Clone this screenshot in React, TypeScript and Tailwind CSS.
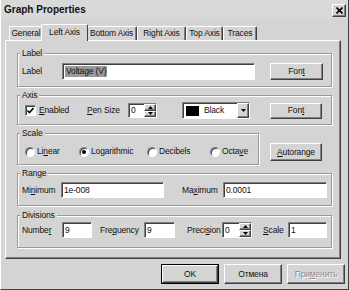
import React from "react";

const raised =
  "border border-t-white border-l-white border-r-[#404040] border-b-[#404040] shadow-[inset_-1px_-1px_0_#808080]";
const sunken =
  "bg-white border border-t-[#808080] border-l-[#808080] border-r-white border-b-white shadow-[inset_1px_1px_0_#404040]";

const Button = ({
  children,
  className = "",
  disabled = false,
}: {
  children: React.ReactNode;
  className?: string;
  disabled?: boolean;
}) => (
  <div
    className={`${raised} flex items-center justify-center ${
      disabled ? "text-[#8c8c8c] [text-shadow:1px_1px_0_#fff]" : ""
    } ${className}`}
  >
    {children}
  </div>
);

const Field = ({ value, className = "" }: { value: string; className?: string }) => (
  <div className={`${sunken} flex items-center pl-[2px] ${className}`}>{value}</div>
);

const Spin = ({ value, className = "" }: { value: string; className?: string }) => (
  <div className={`${sunken} flex items-stretch ${className}`}>
    <div className="flex-1 pl-[2px] flex items-center">{value}</div>
    <div className="w-[12px] flex flex-col">
      <div className={`${raised} flex-1 flex items-center justify-center bg-[#d4d4d4]`}>
        <svg width="5" height="3" viewBox="0 0 5 3">
          <path d="M2.5 0L5 3H0z" fill="#000" />
        </svg>
      </div>
      <div className={`${raised} flex-1 flex items-center justify-center bg-[#d4d4d4]`}>
        <svg width="5" height="3" viewBox="0 0 5 3">
          <path d="M0 0h5L2.5 3z" fill="#000" />
        </svg>
      </div>
    </div>
  </div>
);

const Group = ({
  title,
  className = "",
  children,
}: {
  title: string;
  className?: string;
  children: React.ReactNode;
}) => (
  <div
    className={`border border-[#9a9a9a] shadow-[inset_1px_1px_0_#fff,1px_1px_0_#fff] flex flex-col ${className}`}
  >
    <span className="-mt-[7px] ml-[2px] px-[2px] w-fit bg-[#d4d4d4] leading-[12px]">{title}</span>
    {children}
  </div>
);

const Radio = ({ checked = false }: { checked?: boolean }) => (
  <div className="w-[10px] h-[10px] rounded-full bg-white border border-t-[#808080] border-l-[#808080] border-r-white border-b-white shadow-[inset_1px_1px_0_#404040] flex items-center justify-center">
    {checked && <div className="w-[4px] h-[4px] rounded-full bg-black" />}
  </div>
);

const tabs = ["General", "Left Axis", "Bottom Axis", "Right Axis", "Top Axis", "Traces"];
const tabWidths = ["w-[34px]", "w-[47px]", "w-[51px]", "w-[49px]", "w-[37px]", "w-[34px]"];

export default function App() {
  return (
    <div
      className="w-[349px] h-[290px] bg-[#d4d4d4] text-[#111] text-[8.5px] tracking-[-0.15px] leading-[11px] flex flex-col border-r border-b border-r-[#404040] border-b-[#404040] border-l border-l-white overflow-hidden"
      style={{ fontFamily: '"Liberation Sans", Arial, sans-serif' }}
    >
      {/* title bar */}
      <div className="h-[19px] bg-[#d9d9d9] flex items-center justify-between pl-[3px] pr-[2px]">
        <span className="font-bold text-[10px] tracking-normal">Graph Properties</span>
        <div className={`${raised} bg-[#d4d4d4] w-[14px] h-[13px] flex items-center justify-center mt-[1px]`}>
          <svg width="7" height="7" viewBox="0 0 7 7">
            <path d="M0.5 0.5L6.5 6.5M6.5 0.5L0.5 6.5" stroke="#000" strokeWidth="1.6" />
          </svg>
        </div>
      </div>

      {/* tabs */}
      <div className="h-[21px] flex items-end pl-[8px]">
        {tabs.map((t, i) =>
          i === 1 ? (
            <div
              key={t}
              className={`${tabWidths[i]} -mx-[2px] h-[17px] -mb-[1px] z-10 relative bg-[#d4d4d4] border-t border-l border-r border-t-white border-l-white border-r-[#404040] rounded-t-[2px] flex items-start justify-center pt-[2px]`}
            >
              {t}
            </div>
          ) : (
            <div
              key={t}
              className={`${tabWidths[i]} h-[14px] border-t border-l border-r border-t-white border-l-white border-r-[#404040] shadow-[inset_-1px_0_0_#808080] rounded-t-[2px] flex items-center justify-center whitespace-nowrap`}
            >
              {t}
            </div>
          )
        )}
      </div>

      {/* panel */}
      <div className="ml-[4px] w-[336px] h-[219px] border border-t-white border-l-white border-r-[#404040] border-b-[#404040] shadow-[inset_-1px_-1px_0_#808080] pt-[12px] pl-[11px] flex flex-col">
        <Group title="Label" className="w-[315px] h-[34px]">
          <div className="mt-[4px] flex items-center pl-[4px]">
            <span className="w-[40px]">Label</span>
            <div className={`${sunken} w-[193px] h-[17px] flex items-center pl-[2px]`}>
              <span className="bg-[#9a9a9a] px-[1px] leading-[11px]">Voltage (V)</span>
            </div>
            <Button className="ml-[15px] w-[53px] h-[17px]">
              Fon<u>t</u>
            </Button>
          </div>
        </Group>

        <Group title="Axis" className="w-[315px] h-[30px] mt-[8px]">
          <div className="mt-[1px] h-[17px] flex items-center pl-[7px]">
            <div className="w-[62px] flex items-center">
              <div className={`${sunken} w-[11px] h-[11px] flex items-center justify-center`}>
                <svg width="7" height="7" viewBox="0 0 7 7">
                  <path d="M0.5 3.5L2.5 5.5L6.5 1" stroke="#000" strokeWidth="1.6" fill="none" />
                </svg>
              </div>
              <span className="ml-[3px]">
                <u>E</u>nabled
              </span>
            </div>
            <span className="w-[41px]">
              <u>P</u>en Size
            </span>
            <Spin value="0" className="w-[29px] h-[15px]" />
            <div className={`${sunken} ml-[25px] w-[68px] h-[17px] flex items-center`}>
              <div className="ml-[3px] w-[13px] h-[10px] bg-black" />
              <span className="ml-[5px] flex-1">Black</span>
              <div className={`${raised} bg-[#d4d4d4] w-[12px] h-full flex items-center justify-center`}>
                <svg width="5" height="3" viewBox="0 0 5 3">
                  <path d="M0 0h5L2.5 3z" fill="#000" />
                </svg>
              </div>
            </div>
            <Button className="ml-[20px] w-[52px] h-[16px]">
              Fon<u>t</u>
            </Button>
          </div>
        </Group>

        <div className="flex items-start mt-[8px]">
          <Group title="Scale" className="w-[242px] h-[32px]">
            <div className="mt-[6px] h-[13px] flex items-center pl-[7px]">
              <div className="w-[54px] flex items-center gap-[2px]">
                <Radio />
                <span>
                  Li<u>n</u>ear
                </span>
              </div>
              <div className="w-[68px] flex items-center gap-[2px]">
                <Radio checked />
                <span>Logarithmic</span>
              </div>
              <div className="w-[63px] flex items-center gap-[2px]">
                <Radio />
                <span>Decibels</span>
              </div>
              <div className="flex items-center gap-[2px]">
                <Radio />
                <span>
                  Octa<u>v</u>e
                </span>
              </div>
            </div>
          </Group>
          <Button className="ml-[11px] mt-[10px] w-[52px] h-[18px]">
            <span>
              <u>A</u>utorange
            </span>
          </Button>
        </div>

        <Group title="Range" className="w-[315px] h-[33px] mt-[8px]">
          <div className="mt-[3px] flex items-center pl-[4px]">
            <span className="w-[39px]">
              Mi<u>n</u>imum
            </span>
            <Field value="1e-008" className="w-[103px] h-[16px]" />
            <span className="ml-[18px] w-[41px]">
              Ma<u>x</u>imum
            </span>
            <Field value="0.0001" className="w-[104px] h-[16px]" />
          </div>
        </Group>

        <Group title="Divisions" className="w-[315px] h-[33px] mt-[9px]">
          <div className="mt-[1px] flex items-center pl-[4px]">
            <span className="w-[40px]">
              Numbe<u>r</u>
            </span>
            <Field value="9" className="w-[30px] h-[16px]" />
            <span className="ml-[8px] w-[44px]">
              Fre<u>q</u>uency
            </span>
            <Field value="9" className="w-[31px] h-[16px]" />
            <span className="ml-[12px] w-[35px]">
              Preci<u>s</u>ion
            </span>
            <Spin value="0" className="w-[30px] h-[16px]" />
            <span className="ml-[11px] w-[25px]">
              <u>S</u>cale
            </span>
            <Field value="1" className="w-[39px] h-[16px]" />
          </div>
        </Group>
      </div>

      {/* buttons */}
      <div className="flex justify-end gap-[5px] pr-[3px] mt-[5px]">
        <div className="w-[58px] h-[20px] border border-black flex">
          <Button className="flex-1">OK</Button>
        </div>
        <Button className="w-[58px] h-[20px]">Отмена</Button>
        <Button disabled className="w-[58px] h-[20px]">
          При<u>м</u>енить
        </Button>
      </div>
    </div>
  );
}
